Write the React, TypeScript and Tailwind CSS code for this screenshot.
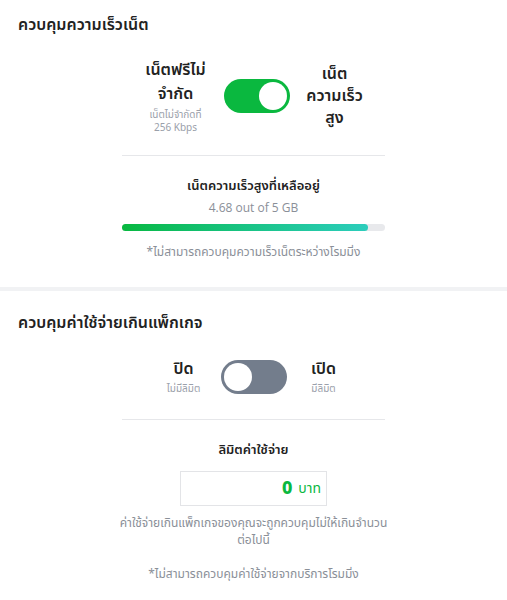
import React from "react";

const thai = { fontFamily: '"Noto Sans Thai", "Noto Sans", "Liberation Sans", sans-serif' };

function Toggle({ on }: { on: boolean }) {
  return (
    <div
      className={`flex h-[34px] w-[66px] shrink-0 items-center rounded-full px-[3px] ${
        on ? "justify-end bg-[#0ab83f]" : "justify-start bg-[#737d8c]"
      }`}
    >
      <div className="h-[28px] w-[28px] rounded-full bg-white" />
    </div>
  );
}

export default function App() {
  return (
    <div className="w-[507px] bg-white text-[#222]" style={thai}>
      <section className="px-[18px] pt-[12px] pb-[26px]">
        <h2 className="text-[16px] font-semibold leading-[26px]">ควบคุมความเร็วเน็ต</h2>

        <div className="mt-[20px] flex items-center justify-center gap-[12px]">
          <div className="flex w-[72px] flex-col items-center text-center">
            <p className="text-[16px] font-semibold leading-[24px]">เน็ตฟรีไม่จำกัด</p>
            <p className="mt-[2px] text-[10px] leading-[14px] text-[#9aa0aa]">เน็ตไม่จำกัดที่</p>
            <p className="text-[10px] leading-[12px] text-[#9aa0aa]">256 Kbps</p>
          </div>
          <Toggle on />
          <div className="w-[66px] text-center text-[16px] font-semibold leading-[22px]">
            เน็ตความเร็วสูง
          </div>
        </div>

        <div className="mx-auto mt-[21px] w-[263px] border-t border-[#e6e7ea]" />

        <div className="mx-auto w-[263px] text-center">
          <p className="mt-[20px] text-[13px] font-semibold leading-[20px]">เน็ตความเร็วสูงที่เหลืออยู่</p>
          <p className="mt-[3px] text-[12px] leading-[18px] text-[#8a8f98]" style={{ fontFamily: '"Open Sans", sans-serif' }}>
            4.68 out of 5 GB
          </p>
          <div className="mt-[7px] h-[7px] w-full rounded-full bg-[#e8e9ec]">
            <div
              className="h-full rounded-full bg-gradient-to-r from-[#08b83f] to-[#2ccdbc]"
              style={{ width: `${(4.68 / 5) * 100}%` }}
            />
          </div>
          <p className="mt-[12px] text-[12px] leading-[18px] text-[#8a8f98]">
            *ไม่สามารถควบคุมความเร็วเน็ตระหว่างโรมมิ่ง
          </p>
        </div>
      </section>

      <div className="h-[4px] bg-[#f1f2f4]" />

      <section className="px-[18px] pt-[19px] pb-[20px]">
        <h2 className="text-[16px] font-semibold leading-[26px]">ควบคุมค่าใช้จ่ายเกินแพ็กเกจ</h2>

        <div className="mt-[22px] flex items-center justify-center gap-[12px]">
          <div className="flex w-[50px] flex-col items-center">
            <p className="text-[16px] font-semibold leading-[22px]">ปิด</p>
            <p className="mt-[2px] text-[10px] leading-[14px] text-[#9aa0aa]">ไม่มีลิมิต</p>
          </div>
          <Toggle on={false} />
          <div className="flex w-[50px] flex-col items-center">
            <p className="text-[16px] font-semibold leading-[22px]">เปิด</p>
            <p className="mt-[2px] text-[10px] leading-[14px] text-[#9aa0aa]">มีลิมิต</p>
          </div>
        </div>

        <div className="mx-auto mt-[23px] w-[263px] border-t border-[#e6e7ea]" />

        <div className="flex flex-col items-center">
          <p className="mt-[20px] text-[13px] font-semibold leading-[20px]">ลิมิตค่าใช้จ่าย</p>
          <div className="mt-[11px] flex h-[35px] w-[147px] items-center justify-end gap-[6px] border border-[#e3e4e7] px-[5px]">
            <span className="text-[18px] font-extrabold leading-none text-[#0ab83f]">0</span>
            <span className="text-[14px] leading-none text-[#0ab83f]">บาท</span>
          </div>
          <p className="mt-[9px] w-[270px] text-center text-[12px] leading-[17px] text-[#8a8f98]">
            ค่าใช้จ่ายเกินแพ็กเกจของคุณจะถูกควบคุมไม่ให้เกินจำนวนต่อไปนี้
          </p>
          <p className="mt-[16px] text-[12px] leading-[18px] text-[#8a8f98]">
            *ไม่สามารถควบคุมค่าใช้จ่ายจากบริการโรมมิ่ง
          </p>
        </div>
      </section>
    </div>
  );
}
